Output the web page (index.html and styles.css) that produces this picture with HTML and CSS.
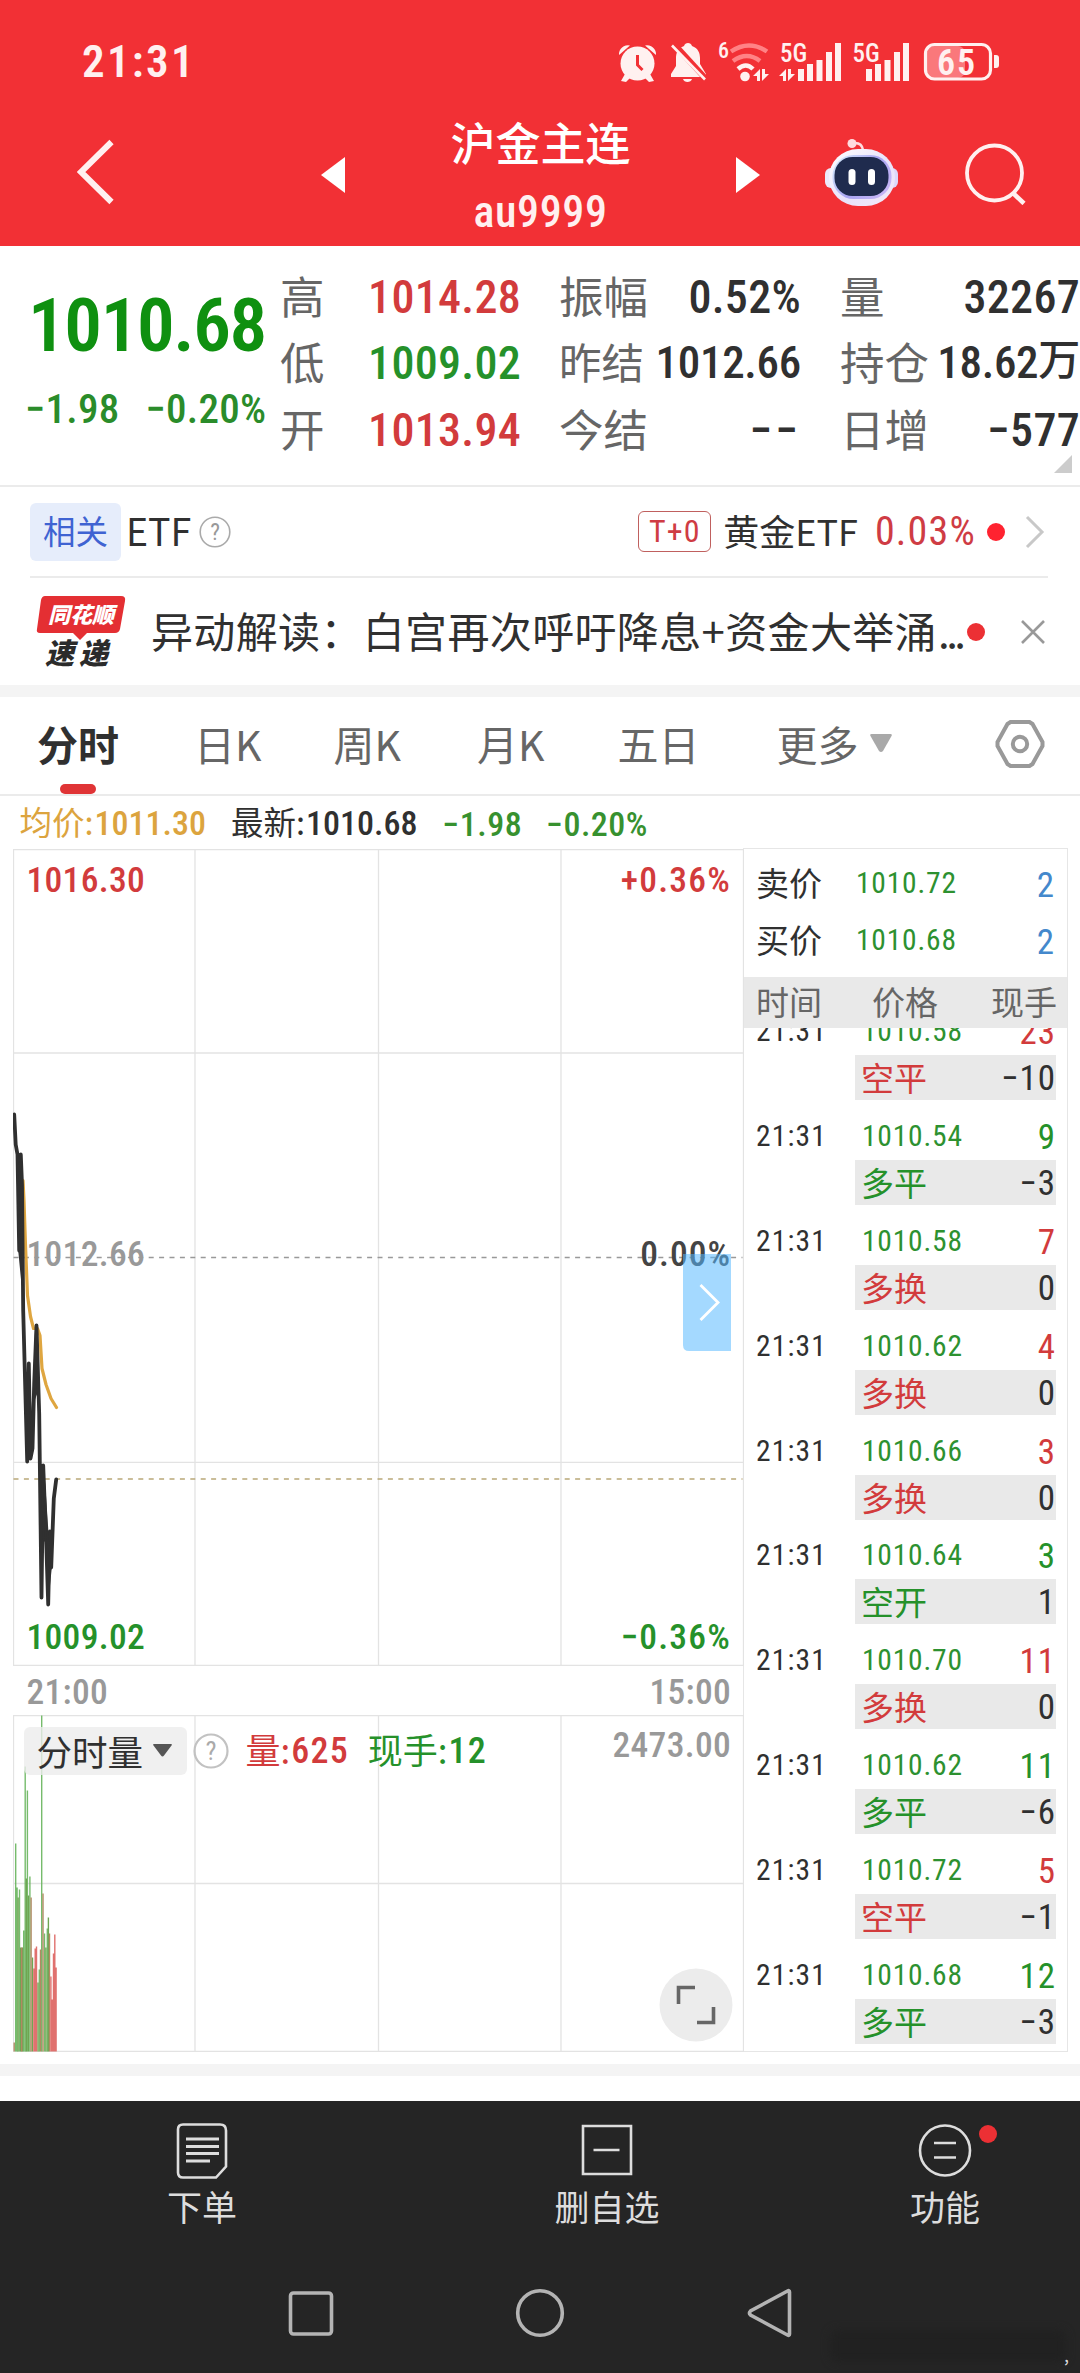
FILE: index.html
```
<!DOCTYPE html>
<html lang="zh-CN">
<head>
<meta charset="utf-8">
<title>沪金主连 au9999</title>
<link rel="stylesheet" href="styles.css">
</head>
<body>
<div class="screen">

<header class="header">
  <div class="status">
    <span class="status-time num">21:31</span>
    <svg class="status-icons" width="392" height="44" viewBox="616 38 392 44">
      <g fill="#fff1f0">
        <!-- alarm -->
        <circle cx="637.500" cy="62.500" r="17"/>
        <path d="M619 54a9 9 0 0 1 11-9.500zM656 54a9 9 0 0 0-11-9.500zM625 73l5 4-4 4-5-1zM650 73l-5 4 4 4 5-1z"/>
        <path d="M637.500 54v10l5 5" fill="none" stroke="#f23035" stroke-width="3"/>
        <!-- muted bell -->
        <path d="M684 45c1-4 7-4 8 0 6 2 8 7 8 12v6l6 10v3h-35v-3l5-8v-8c0-5 2-10 8-12zM683 78h9c-1 4-8 4-9 0z"/>
        <path d="M674 43l32 35" stroke="#f23035" stroke-width="6"/>
        <path d="M672 44.500l33 34" stroke="#fff1f0" stroke-width="2.600"/>
        <!-- wifi -->
        <g fill="none" stroke-width="4.500">
          <path d="M731 50.500q18-12 36 0" stroke="#ff8285"/>
          <path d="M733 60q14-10 27 0" stroke="#ff8285"/>
          <path d="M738 68q8-7 15 0" stroke="#fff1f0"/>
        </g>
        <circle cx="745" cy="75.500" r="4.800"/>
        <path d="M753 75l7-7v12h-3v-5zM769 73l-7 7v-12h3v5zM779 75l7-7v12h-3v-5zM795 73l-7 7v-12h3v5z"/>
        <!-- signal -->
        <path d="M798 68h6v12h-6zM807 63h6v17h-6zM816.500 59h6v21h-6zM826 51h6v29h-6zM835 42h6v38h-6z"/>
        <path d="M866 68h6v12h-6zM875 63h6v17h-6zM884.500 59h6v21h-6zM894 51h6v29h-6zM903 42h6v38h-6z"/>
        <path d="M994 54h2q3 0 3 3v7q0 3-3 3h-2z"/>
        <rect x="927" y="45" width="38" height="32" rx="7" fill="#fa787b"/>
        <rect x="925.500" y="43.500" width="65" height="34.500" rx="9" fill="none" stroke="#fff1f0" stroke-width="3.200"/>
        <text class="num" x="718" y="57" font-size="22" font-weight="600">6</text>
        <text class="num" x="780" y="61" font-size="25" font-weight="600">5G</text>
        <text class="num" x="852.500" y="61" font-size="25" font-weight="600">5G</text>
        <text class="num battery" x="937" y="74">65</text>
      </g>
    </svg>
  </div>
  <div class="nav">
    <svg class="nav-back" width="38" height="66" viewBox="0 0 38 66"><path d="M34.500 3L4 33l30.500 30" fill="none" stroke="#fff0f0" stroke-width="6"/></svg>
    <svg class="nav-prev" width="24" height="36" viewBox="0 0 24 36"><path d="M24 0v36L0 18z" fill="#fff"/></svg>
    <div class="nav-title">
      <h1>沪金主连</h1>
      <p class="num">au9999</p>
    </div>
    <svg class="nav-next" width="24" height="36" viewBox="0 0 24 36"><path d="M0 0v36l24-18z" fill="#fff"/></svg>
    <svg class="nav-robot" width="74" height="68" viewBox="0 0 74 68">
      <defs>
        <linearGradient id="shell" x1="0" y1="0" x2="1" y2="1"><stop offset="0" stop-color="#fff"/><stop offset=".55" stop-color="#e8e2fa"/><stop offset="1" stop-color="#f4e9f8"/></linearGradient>
        <linearGradient id="rim" x1="0" y1="0" x2="1" y2=".6"><stop offset="0" stop-color="#d9f2fb"/><stop offset=".6" stop-color="#a9a4f2"/><stop offset="1" stop-color="#c4b4f6"/></linearGradient>
      </defs>
      <path d="M28 5q9-1 10 7" fill="none" stroke="#ffdcdf" stroke-width="2.500"/>
      <circle cx="27" cy="5.500" r="4.500" fill="#ffdcdf"/>
      <rect x="0" y="30" width="13" height="20" rx="6" fill="#ece9fa"/>
      <rect x="60" y="30" width="13" height="20" rx="6" fill="#ddd8fa"/>
      <rect x="4" y="11" width="66" height="57" rx="29" fill="url(#shell)"/>
      <rect x="7.500" y="17" width="59" height="44" rx="21" fill="url(#rim)"/>
      <rect x="9.500" y="19" width="54" height="39" rx="18" fill="#1f2b4e"/>
      <rect x="23.500" y="31" width="7" height="16" rx="3.500" fill="#fff"/>
      <rect x="43" y="31" width="7" height="16" rx="3.500" fill="#fff"/>
    </svg>
    <svg class="nav-search" width="62" height="62" viewBox="0 0 62 62" fill="none" stroke="#fff0f0" stroke-width="3.800"><circle cx="29.500" cy="30" r="27.500"/><path d="M48 50l11 10.500" stroke-width="4.500"/></svg>
  </div>
</header>

<section class="quote">
  <div class="quote-main num">
    <div class="price">1010.68</div>
    <div class="change"><span>−1.98</span><span>−0.20%</span></div>
  </div>
  <dl class="stats">
    <dt>高</dt><dd class="up">1014.28</dd><dt>振幅</dt><dd>0.52%</dd><dt>量</dt><dd>32267</dd>
    <dt>低</dt><dd class="down">1009.02</dd><dt class="tight">昨结</dt><dd class="tight">1012.66</dd><dt>持仓</dt><dd class="tight">18.62<b>万</b></dd>
    <dt>开</dt><dd class="up">1013.94</dd><dt>今结</dt><dd class="wide">−−</dd><dt>日增</dt><dd>−577</dd>
  </dl>
  <i class="corner"></i>
</section>

<section class="related">
  <span class="tag">相关</span>
  <span class="related-name">ETF</span>
  <svg class="help" width="32" height="32" viewBox="0 0 32 32"><circle cx="16" cy="16" r="14.800" fill="none" stroke="#aaa" stroke-width="1.600"/><text x="16" y="24" text-anchor="middle" class="num mark" font-size="23" fill="#999">?</text></svg>
  <span class="t0 num">T+0</span>
  <span class="fund">黄金ETF</span>
  <span class="fund-pct num">0.03%</span>
  <i class="dot"></i>
  <svg class="go" width="20" height="34" viewBox="0 0 20 34"><path d="M2 2l15 15L2 32" fill="none" stroke="#c8c8c8" stroke-width="3"/></svg>
</section>

<section class="news">
  <div class="logo">
    <svg width="90" height="46" viewBox="0 0 90 46"><path d="M9 1h76q5 0 4 5l-5 28q-1 4-5 4H51l-7 7-7-7H4q-4 0-3-4L5 5q1-4 4-4z" fill="#e42f33"/></svg>
    <span class="logo-top">同花顺</span>
    <span class="logo-bottom">速递</span>
  </div>
  <span class="news-text">异动解读：白宫再次呼吁降息+资金大举涌<span class="dots">...</span></span>
  <i class="dot"></i>
  <svg class="close" width="24" height="24" viewBox="0 0 24 24"><path d="M1 1l22 22M23 1L1 23" stroke="#999" stroke-width="2.600"/></svg>
</section>

<nav class="tabs">
  <span class="tab active">分时</span>
  <span class="tab">日K</span>
  <span class="tab">周K</span>
  <span class="tab">月K</span>
  <span class="tab">五日</span>
  <span class="tab">更多<svg width="22" height="18" viewBox="0 0 22 18"><path d="M1.500 0h19q2 0 1 2l-8.500 15q-2 2-4 0L.5 2Q-.5 0 1.500 0z" fill="#a9a9a9"/></svg></span>
  <svg class="settings" width="50" height="48" viewBox="0 0 50 48" fill="none" stroke="#999" stroke-width="4"><path d="M15.500 2h19l3 2L47.500 22v4L37.500 44l-3 2h-19l-3-2L2.500 26v-4L12.500 4z"/><circle cx="25" cy="24" r="7.200"/></svg>
</nav>

<section class="market">
  <div class="charts">
    <div class="summary">
      <span class="avg">均价:<b class="num">1011.30</b></span>
      <span class="last">最新:<b class="num">1010.68</b></span>
      <span class="down num">−1.98</span>
      <span class="down num">−0.20%</span>
    </div>

    <div class="plot plot-price">
      <svg class="plot-bg" width="731" height="817" viewBox="12.500 848.500 731 817" fill="none">
        <g stroke="#e3e3e3" stroke-width="1.300">
          <path d="M13 849.200h730V1665H13zM194.500 849v816M378 849v816M560.500 849v816M13 1052.500h730M13 1461.800h730"/>
        </g>
        <path d="M13 1257h729" stroke="#999" stroke-width="1.400" stroke-dasharray="5 5.400"/>
        <path d="M13 1478.500h729" stroke="#b9a878" stroke-width="1.500" stroke-dasharray="5 5.400"/>
      </svg>
      <div class="axis"><span class="up">1016.30</span><span class="up pct">+0.36%</span></div>
      <div class="axis mid"><span class="muted">1012.66</span><span class="zero">0.00%</span></div>
      <div class="axis low"><span class="down">1009.02</span><span class="down pct">−0.36%</span></div>
      <svg class="plot-line" width="731" height="817" viewBox="12.500 848.500 731 817" fill="none" stroke-linecap="round" stroke-linejoin="round">
        <path d="M22.500 1180l1 20 1.500 45 2 50 3 21 3 12h4l2.500 7 2 33 4 16 5 14 5.500 9" stroke="#dfa640" stroke-width="3.200"/>
        <path d="M13.700 1114l1.500 30 1.800 10 1.700 96 1.600-96 1.200 30 1.200 126 4 151 1.600-98 1.700 95 2 -10 1.700-65 2.300-58 2.700 88 2.300 184 1.700-132 3 76 2 63 1.600-73 1.400 36 2.600-69 2.400-19" stroke="#303030" stroke-width="3.800"/>
        <path d="M17 1154l3.300 0 1.700 130-3.300-34zM25 1400l3.500-20 3.500 70-5 10zM33 1400l2.500-70 1.500 60zM41.500 1480l2 60 3 0 1.500 50 3-30-3.500-20-4-60z" fill="#303030" stroke="#303030" stroke-width="2"/>
      </svg>
      <svg class="drawer" width="48" height="97" viewBox="0 0 48 97"><path d="M0 0h48v97H6q-6 0-6-6z" fill="#54b8ff" fill-opacity=".53"/><path d="M17.500 31l17.500 17.500L17.500 66" fill="none" stroke="#fff" stroke-width="2.800"/></svg>
    </div>

    <div class="axis times"><span>21:00</span><span>15:00</span></div>

    <div class="plot plot-volume">
      <svg class="plot-bg" width="731" height="337" viewBox="12.500 1714.500 731 337" fill="none">
        <path d="M13 1715h730v336H13zM194.500 1715v336M378 1715v336M560.500 1715v336M13 1883h730" stroke="#e3e3e3" stroke-width="1.300"/>
        <g stroke-width="1.400">
          <path stroke="#67b45c" stroke-opacity=".9" d="M15.200 2051v-208M16.600 2051v-164M19 2051v-162M23.200 2051v-121M24.700 2051v-285M26.900 2051v-261M29.400 2051v-175M41.200 2051v-336M44 2051v-118M46.800 2051v-123M38.800 2051v-82"/>
          <path stroke="#6fa552" d="M17.600 2051v-154M20.200 2051v-104M22 2051v-104M25.800 2051v-173M28 2051v-156M32 2051v-94M37.500 2051v-69M45.400 2051v-104M47.900 2051v-134"/>
          <path stroke="#b08a63" d="M13.700 2051v-9M21.200 2051v-104M30.600 2051v-154M40 2051v-102M42.500 2051v-158M49 2051v-118"/>
          <path stroke="#e0716e" d="M33.400 2051v-83M34.700 2051v-103M36 2051v-105M50.400 2051v-75M51.700 2051v-52M53 2051v-98M54.300 2051v-117M55.600 2051v-84"/>
        </g>
      </svg>
      <div class="volume-head">
        <span class="indicator">分时量<svg width="19" height="13" viewBox="0 0 19 13"><path d="M1 0h17q1.500 0 .5 1.500l-7.500 10q-1.500 2-3 0L.5 1.500Q-.5 0 1 0z" fill="#555"/></svg></span>
        <svg class="help" width="36" height="36" viewBox="0 0 36 36"><circle cx="18" cy="18" r="16.500" fill="none" stroke="#c2c2c2" stroke-width="2.200"/><text x="18" y="27" text-anchor="middle" class="num mark" font-size="26" fill="#aaa">?</text></svg>
        <span class="vol up">量:<b class="num">625</b></span>
        <span class="vol down">现手:<b class="num">12</b></span>
        <span class="vol-max num">2473.00</span>
      </div>
      <svg class="expand" width="74" height="74" viewBox="0 0 74 74"><circle cx="37" cy="37" r="36.500" fill="#ececec"/><path d="M36 19.500H19.500V36M38 54.500h16.500V39" fill="none" stroke="#666" stroke-width="3.600"/></svg>
    </div>
  </div>

  <aside class="ticks">
    <div class="bid"><span>卖价</span><span class="tick-price">1010.72</span><span class="tick-qty">2</span></div>
    <div class="bid"><span>买价</span><span class="tick-price">1010.68</span><span class="tick-qty">2</span></div>
    <div class="ticks-head"><span>时间</span><span>价格</span><span>现手</span></div>
    <div class="ticks-body">
      <div class="tick"><span class="tick-time">21:31</span><span class="tick-price">1010.58</span><span class="tick-qty up">23</span><div class="tick-kind"><em class="up">空平</em><span class="tick-qty">−10</span></div></div>
      <div class="tick"><span class="tick-time">21:31</span><span class="tick-price">1010.54</span><span class="tick-qty down">9</span><div class="tick-kind"><em class="down">多平</em><span class="tick-qty">−3</span></div></div>
      <div class="tick"><span class="tick-time">21:31</span><span class="tick-price">1010.58</span><span class="tick-qty up">7</span><div class="tick-kind"><em class="up">多换</em><span class="tick-qty">0</span></div></div>
      <div class="tick"><span class="tick-time">21:31</span><span class="tick-price">1010.62</span><span class="tick-qty up">4</span><div class="tick-kind"><em class="up">多换</em><span class="tick-qty">0</span></div></div>
      <div class="tick"><span class="tick-time">21:31</span><span class="tick-price">1010.66</span><span class="tick-qty up">3</span><div class="tick-kind"><em class="up">多换</em><span class="tick-qty">0</span></div></div>
      <div class="tick"><span class="tick-time">21:31</span><span class="tick-price">1010.64</span><span class="tick-qty down">3</span><div class="tick-kind"><em class="down">空开</em><span class="tick-qty">1</span></div></div>
      <div class="tick"><span class="tick-time">21:31</span><span class="tick-price">1010.70</span><span class="tick-qty up">11</span><div class="tick-kind"><em class="up">多换</em><span class="tick-qty">0</span></div></div>
      <div class="tick"><span class="tick-time">21:31</span><span class="tick-price">1010.62</span><span class="tick-qty down">11</span><div class="tick-kind"><em class="down">多平</em><span class="tick-qty">−6</span></div></div>
      <div class="tick"><span class="tick-time">21:31</span><span class="tick-price">1010.72</span><span class="tick-qty up">5</span><div class="tick-kind"><em class="up">空平</em><span class="tick-qty">−1</span></div></div>
      <div class="tick"><span class="tick-time">21:31</span><span class="tick-price">1010.68</span><span class="tick-qty down">12</span><div class="tick-kind"><em class="down">多平</em><span class="tick-qty">−3</span></div></div>
    </div>
  </aside>
</section>

<div class="band"></div>

<footer class="footer">
  <div class="actions">
    <div class="action">
      <svg width="56" height="56" viewBox="0 0 56 56" fill="none" stroke="#ddd" stroke-width="2.600"><path d="M9 1.500h37q6 0 6 6v36L42 54.500H9q-5 0-5-5v-43q0-5 5-5z"/><path d="M12 16h33M12 23.500h33M12 30.500h33M12 38h24" stroke-width="3"/></svg>
      <span>下单</span>
    </div>
    <div class="action">
      <svg width="56" height="56" viewBox="0 0 56 56" fill="none" stroke="#ddd" stroke-width="2.600"><path d="M4 3h48v48H4zM14.500 27h26"/></svg>
      <span>删自选</span>
    </div>
    <div class="action">
      <svg width="56" height="56" viewBox="0 0 56 56" fill="none" stroke="#ddd" stroke-width="2.600"><circle cx="28" cy="27.500" r="25"/><path d="M17 20h22M17 34.500h22"/></svg>
      <i class="dot"></i>
      <span>功能</span>
    </div>
  </div>
  <div class="system">
    <svg width="50" height="50" viewBox="0 0 50 50"><rect x="4.500" y="5" width="41" height="41" rx="3" fill="none" stroke="#b4b4b4" stroke-width="3.600"/></svg>
    <svg width="50" height="50" viewBox="0 0 50 50"><circle cx="25" cy="25" r="22.300" fill="none" stroke="#b4b4b4" stroke-width="3.600"/></svg>
    <svg width="50" height="50" viewBox="0 0 50 50"><path d="M44.500 4v42q0 2-2 1L5.500 27q-2-2 0-4l37-20q2-1 2 1z" fill="none" stroke="#b4b4b4" stroke-width="3.600"/></svg>
  </div>
  <i class="smudge"></i>
  <span class="comma">,</span>
</footer>

</div>
</body>
</html>
```
FILE: styles.css
```
* { box-sizing: border-box; margin: 0; padding: 0; }
body {
  background: #fff;
  color: #303030;
  font-family: "Noto Sans CJK SC", sans-serif;
}
i, em { font-style: normal; }
svg { display: block; flex: none; }
.num { font-family: "Roboto Condensed", Roboto, sans-serif; font-weight: 500; }
.up { color: #d23b3c; }
.down { color: #25912a; }
.screen { width: 1080px; height: 2373px; overflow: hidden; }
.dot { flex: none; width: 18px; height: 18px; border-radius: 50%; background: #ec3034; }
.mark { font-weight: 400; }

/* header */
.header { height: 246px; background: #f23035; color: #fff0f0; }
.status {
  height: 122px;
  padding: 0 72px 0 82px;
  display: flex;
  align-items: center;
  justify-content: space-between;
}
.status-time { font-size: 45px; letter-spacing: 2.3px; font-weight: 600; }
.battery { font-size: 36px; font-weight: 600; letter-spacing: 2px; }
.nav { height: 100px; padding-left: 77px; display: flex; align-items: center; }
.nav-prev { margin: 6px 0 0 206px; }
.nav-title { width: 391px; height: 134px; margin-top: 11px; text-align: center; }
.nav-title h1 { font-size: 45px; line-height: 61px; height: 67px; font-weight: 500; color: #fff; }
.nav-title p { font-size: 44px; line-height: 69px; letter-spacing: .6px; }
.nav-next { margin: 6px 65px 0 0; }
.nav-robot { margin-right: 66px; }
.nav-search { margin-top: 3px; }

/* quote */
.quote {
  position: relative;
  height: 241px;
  border-bottom: 2px solid #ebebeb;
  display: flex;
}
.quote-main { width: 280px; padding: 42px 0 0 28px; color: #0f9010; }
.price { font-size: 75px; line-height: 75px; font-weight: 600; letter-spacing: -1.4px; }
.change { margin-top: 23px; line-height: 46px; font-size: 41px; letter-spacing: .3px; display: flex; gap: 26px; margin-left: -3px; color: #2a8c2a; }
.stats {
  display: grid;
  grid-template-columns: 93px 148px 38px 102px 140px 39px 92px 148px;
  grid-template-rows: repeat(3, 66.3px);
  align-content: start;
  padding-top: 18px;
  line-height: 66px;
}
.stats dt { font-size: 44.500px; color: #666; line-height: 61px; white-space: nowrap; }
.stats dt:nth-of-type(3n+1) { grid-column: 1; }
.stats dt:nth-of-type(3n+2) { grid-column: 4; }
.stats dt:nth-of-type(3n) { grid-column: 7; }
.stats dt.tight { font-size: 42.500px; }
.stats dd {
  font-family: "Roboto Condensed", "Noto Sans CJK SC", sans-serif;
  font-weight: 500;
  font-size: 46px;
  letter-spacing: .3px;
  display: flex;
  justify-content: flex-end;
  white-space: nowrap;
}
.stats dd.tight { font-size: 45px; letter-spacing: -.3px; }
.stats dd.wide { letter-spacing: 3px; }
.stats dd b { font-size: 42px; font-weight: 500; line-height: 62px; }
.corner {
  position: absolute;
  right: 8px;
  bottom: 12px;
  border: 9px solid;
  border-color: transparent #ccc #ccc transparent;
}

/* related */
.related {
  height: 91px;
  margin: 0 32px 0 30px;
  border-bottom: 2px solid #ebebeb;
  display: flex;
  align-items: center;
}
.tag {
  width: 91px;
  height: 58px;
  border-radius: 6px;
  background: #e6edfb;
  color: #3f63d2;
  font-size: 32.500px;
  line-height: 54px;
  text-align: center;
}
.related-name { margin: -4px 8px 0 5px; font-size: 37.500px; }
.t0 {
  margin-left: auto;
  width: 73px;
  height: 41px;
  border: 1.500px solid #c0605e;
  border-radius: 6px;
  color: #cf3c44;
  font-size: 32px;
  font-weight: 400;
  line-height: 38px;
  letter-spacing: 1px;
  text-align: center;
}
.fund { margin: -4px 0 0 12px; font-size: 36px; line-height: 50px; font-weight: 400; }
.fund-pct { margin-left: 17px; font-size: 40px; font-weight: 400; letter-spacing: 1.2px; color: #cf3c44; }
.related .dot { margin: 0 20px 0 11px; background: #ff2330; }
.go { margin-right: 3px; }

/* news */
.news { height: 107px; padding: 0 35px 0 36px; display: flex; align-items: center; }
.logo { width: 90px; height: 74px; position: relative; font-weight: 900; font-style: italic; }
.logo-top { position: absolute; left: 12px; top: 2px; font-size: 22px; line-height: 32px; color: #fff; }
.logo-bottom { position: absolute; left: 9px; top: 40px; font-size: 29px; line-height: 32px; letter-spacing: 5px; color: #2b2b2b; }
.news-text { margin: -4px 0 0 25px; font-size: 42px; line-height: 60px; letter-spacing: .35px; white-space: nowrap; }
.dots { letter-spacing: -3.500px; margin-left: 1px; }
.news .dot { margin-left: auto; margin-right: 36px; }

/* tabs */
.tabs {
  position: relative;
  height: 111px;
  border-top: 12px solid #f4f4f4;
  border-bottom: 2px solid #ebebeb;
  padding: 0 35px 3px 37px;
  display: flex;
  align-items: center;
  font-size: 41px;
  color: #666;
}
.tab { white-space: nowrap; display: flex; align-items: center; gap: 11px; line-height: 56px; margin-top: -3px; }
.tab:nth-child(2) { margin-left: 75px; }
.tab:nth-child(3) { margin-left: 72px; }
.tab:nth-child(4) { margin-left: 76px; }
.tab:nth-child(5) { margin-left: 73px; }
.tab:nth-child(6) { margin-left: 77px; }
.tab.active { position: relative; font-weight: 700; color: #303030; }
.tab.active::after {
  content: "";
  position: absolute;
  left: 23px;
  bottom: -23px;
  width: 36px;
  height: 10px;
  border-radius: 5px;
  background: #e03436;
}
.settings { margin-left: auto; }

/* market */
.market { display: flex; height: 1256px; padding: 0 12px; }
.charts { width: 731px; padding-left: .5px; }
.summary {
  height: 52.500px;
  padding: 1px 0 0 7px;
  display: flex;
  align-items: center;
  font-size: 32.500px;
  white-space: nowrap;
}
.summary b, .volume-head b { font-weight: 500; margin-left: 1px; }
.summary .num { font-size: 34px; }
.summary > span { line-height: 50px; }
.summary > span:not(.num) { display: flex; }
.summary > span:not(.num) .num { line-height: 54px; }
.avg { color: #dca43e; }
.last { margin: 0 25px; }
.summary > .num { margin-right: 24px; margin-top: 2px; color: #37912f; letter-spacing: .5px; }
.plot { position: relative; display: flex; flex-direction: column; justify-content: space-between; }
.plot-bg, .plot-line { position: absolute; left: 0; top: 0; }
.plot-price { height: 817px; padding: 10px 0; }
.axis {
  position: relative;
  display: flex;
  justify-content: space-between;
  padding: 0 12px 0 14px;
  font: 500 35.500px/42px "Roboto Condensed", Roboto, sans-serif;
  letter-spacing: .3px;
}
.axis.mid { margin-top: -9px; }
.axis.low { margin-bottom: -2px; }
.pct { letter-spacing: 1.2px; }
.muted { color: #999; }
.zero { color: #444; letter-spacing: 1px; }
.drawer { position: absolute; left: 670.500px; top: 405px; }
.times { color: #999; height: 49px; line-height: 53px; }
.plot-volume { height: 337px; }
.volume-head { position: relative; display: flex; padding: 12px 12px 0 11px; align-items: center; height: 60px; }
.indicator {
  display: flex;
  align-items: center;
  gap: 10px;
  width: 163px;
  height: 48px;
  padding-left: 13px;
  border-radius: 6px;
  background: rgba(236, 236, 236, .8);
  font-size: 35.500px;
  line-height: 44px;
}
.volume-head .help { margin: 0 17px 0 6px; }
.vol { display: flex; font-size: 35px; line-height: 44px; margin-right: 19px; }
.vol .num { font-size: 36px; line-height: 48px; letter-spacing: 1.2px; }
.vol-max { margin: -12px 0 0 auto; font-size: 35.500px; letter-spacing: .3px; color: #999; }
.expand { position: absolute; right: 10px; bottom: 10px; }

/* trades */
.ticks {
  width: 325px;
  margin-top: 52px;
  border: 1.500px solid #e6e6e6;
  display: flex;
  flex-direction: column;
  font-size: 33px;
  padding-top: 5px;
}
.bid { height: 57px; display: grid; grid-template-columns: 101px 1fr 40px; padding: 0 12px 0 12px; line-height: 57px; }
.bid + .bid { margin-bottom: 9px; }
.bid .tick-price { line-height: 58px; margin-left: -1px; }
.bid .tick-qty { color: #4488cc; line-height: 63px; }
.tick-time, .tick-price { font: 400 29.500px/60px "Roboto Condensed", Roboto, sans-serif; letter-spacing: .8px; }
.tick-time { letter-spacing: 1.2px; }
.tick-price { color: #2d9130; }
.tick-qty { font: 400 35px/66px "Roboto Condensed", Roboto, sans-serif; letter-spacing: 1px; text-align: right; }
.ticks-head {
  height: 51px;
  background: #e9e9e9;
  color: #666;
  display: flex;
  padding: 0 10px 0 12px;
  line-height: 48px;
}
.ticks-head span:nth-child(2) { margin: 0 auto 0 50px; }
.ticks-body { flex: 1; overflow: hidden; }
.tick { height: 104.900px; display: grid; grid-template-columns: 106px 1fr 60px; grid-template-rows: 60px 45px; padding: 0 11px 0 12px; }
.tick:first-child { margin-top: -33px; }
.tick > .tick-price, .tick > .tick-time { line-height: 72px; }
.tick > .tick-qty { line-height: 76px; }
.tick-kind {
  grid-column: 1 / -1;
  margin-left: 99px;
  padding-left: 6px;
  background: #e9e9e9;
  display: flex;
  justify-content: space-between;
  line-height: 44px;
}
.tick-kind .tick-qty { line-height: 48px; }

.band { height: 12px; margin-top: 12px; background: #f4f4f4; }

/* footer */
.footer { position: relative; margin-top: 25px; height: 273px; background: #252525; color: #ddd; }
.actions { display: flex; padding: 22px 75px 0 142px; }
.action { position: relative; width: 120px; display: flex; flex-direction: column; align-items: center; font-size: 35px; line-height: 52px; }
.action span { margin-top: 1px; }
.action:nth-child(2) { margin-left: 285px; }
.action:nth-child(3) { margin-left: auto; }
.action .dot { position: absolute; left: 94px; top: 2px; }
.system { display: flex; justify-content: center; gap: 179.500px; margin-top: 56px; }
.smudge {
  position: absolute;
  right: 14px;
  bottom: 12px;
  width: 236px;
  height: 32px;
  border-radius: 8px;
  background: #212121;
  filter: blur(4px);
}
.comma { position: absolute; right: 11px; bottom: 8px; font-size: 18px; line-height: 24px; }
```
